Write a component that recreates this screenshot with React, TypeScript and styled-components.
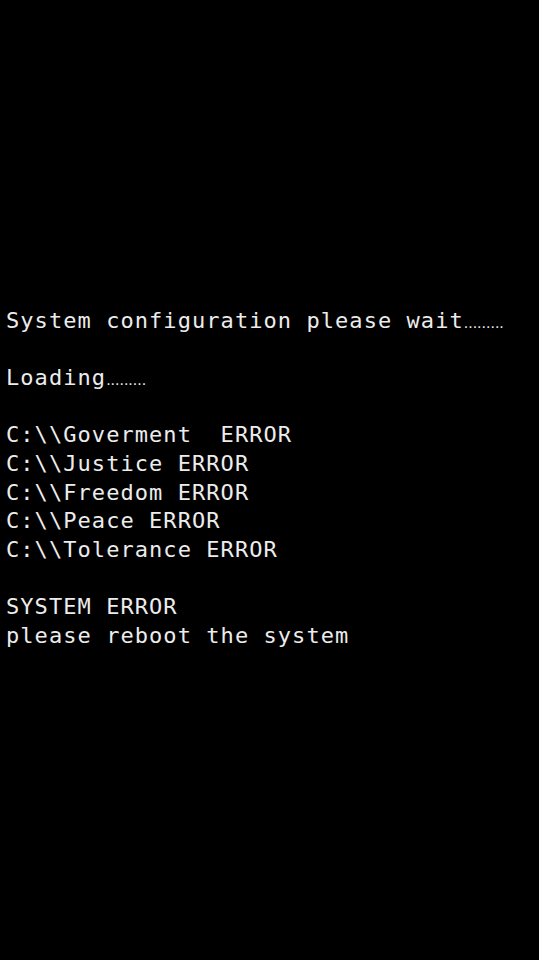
import React from "react";
import styled, { createGlobalStyle } from "styled-components";

const Global = createGlobalStyle`
  html, body { margin: 0; padding: 0; background: #000; }
  body { width: 539px; height: 960px; overflow: hidden; }
`;

const Screen = styled.main`
  width: 539px;
  height: 960px;
  background: #000;
  box-sizing: border-box;
  padding: 307px 0 0 6px;
  display: flex;
  flex-direction: column;
`;

const Line = styled.div<{ $blank?: boolean }>`
  font-family: "DejaVu Sans Mono", "Liberation Mono", monospace;
  font-size: 22px;
  letter-spacing: 1.06px;
  line-height: 28.6px;
  height: 28.6px;
  color: #ececec;
  white-space: pre;
`;

const Dots = styled.span`
  font-family: "Liberation Sans", Arial, sans-serif;
  font-size: 16px;
  letter-spacing: 0;
  color: #e6e6e6;
`;

const lines: { text: string; dots?: boolean }[] = [
  { text: "System configuration please wait", dots: true },
  { text: "" },
  { text: "Loading", dots: true },
  { text: "" },
  { text: "C:\\\\Goverment  ERROR" },
  { text: "C:\\\\Justice ERROR" },
  { text: "C:\\\\Freedom ERROR" },
  { text: "C:\\\\Peace ERROR" },
  { text: "C:\\\\Tolerance ERROR" },
  { text: "" },
  { text: "SYSTEM ERROR" },
  { text: "please reboot the system" },
];

export default function App() {
  return (
    <>
      <Global />
      <Screen>
        {lines.map((l, i) => (
          <Line key={i}>
            {l.text}
            {l.dots && <Dots>.........</Dots>}
          </Line>
        ))}
      </Screen>
    </>
  );
}
